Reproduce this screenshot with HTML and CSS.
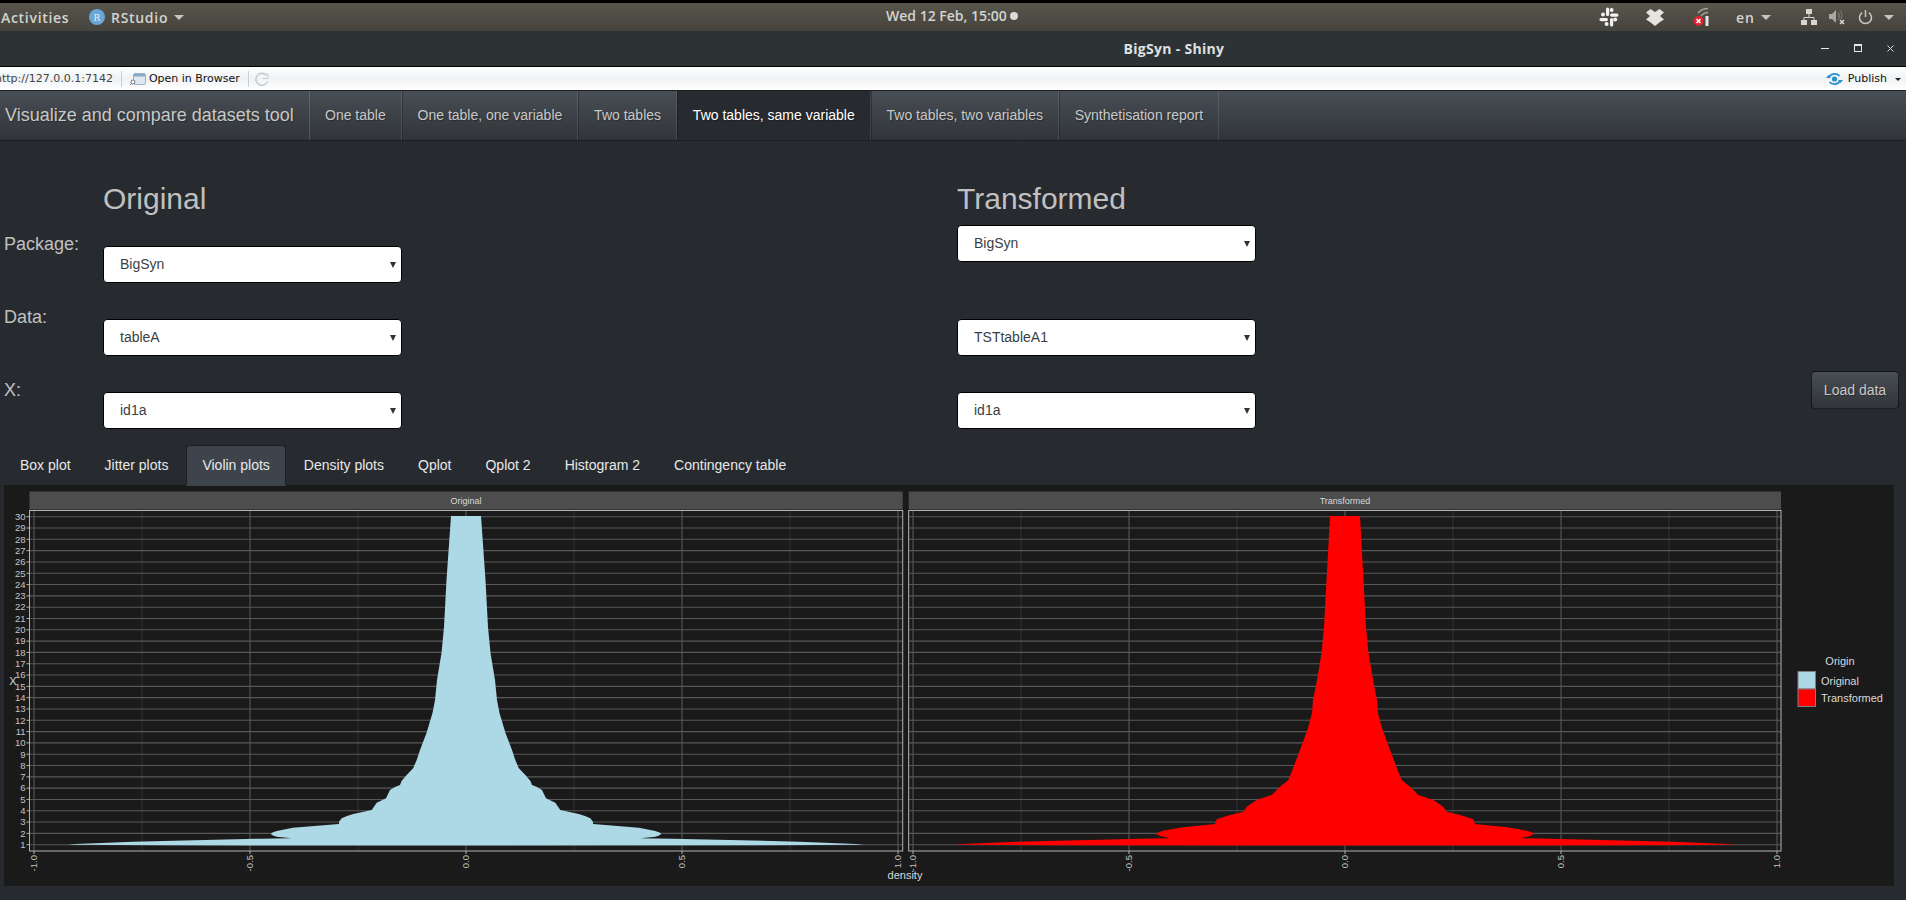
FILE: index.html
```html
<!DOCTYPE html>
<html lang="en">
<head>
    <meta charset="UTF-8">
    <meta name="viewport" content="width=device-width, initial-scale=1.0">
    <title>BigSyn - Shiny</title>
    <link rel="stylesheet" href="styles.css">
</head>
<body>
    <div class="desktop-bar">
        <div class="desktop-left">
            <span class="activities">Activities</span>
            <span class="app-menu">
                <svg class="rstudio-logo" width="16" height="16" viewBox="0 0 16 16"><circle cx="8" cy="8" r="8" fill="#6aa5d8"/><text x="8" y="11.5" class="rstudio-r">R</text></svg>
                <span class="app-name">RStudio</span>
                <span class="caret"></span>
            </span>
        </div>
        <div class="clock">Wed 12 Feb, 15:00<span class="clock-dot"></span></div>
        <div class="tray">
            <svg class="tray-icon slack" width="20" height="20" viewBox="0 0 20 20"><g fill="#f2f2f2"><rect x="7" y="0.5" width="3.2" height="8.5" rx="1.6"/><rect x="11" y="11" width="3.2" height="8.5" rx="1.6"/><rect x="0.5" y="11" width="8.5" height="3.2" rx="1.6"/><rect x="11" y="6.5" width="8.5" height="3.2" rx="1.6"/><circle cx="4" cy="7.6" r="2"/><circle cx="12.6" cy="3" r="2"/><circle cx="16.2" cy="12.6" r="2"/><circle cx="7.6" cy="17" r="2"/></g></svg>
            <svg class="tray-icon dropbox" width="18" height="17" viewBox="0 0 18 17"><path d="M0 3.5 4.5 0 9 3 13.5 0 18 3.5 14 7 18 10.5 14 13 9 17 4 13 0 10.5 4 7Z" fill="#e6e4de"/></svg>
            <svg class="tray-icon wifi" width="18" height="20" viewBox="0 0 18 20"><g fill="none" stroke="#a5a39c" stroke-width="1.6"><path d="M5 6C8 2.500 12 1.500 15 1.500"/><path d="M8 9C10 6.500 12 5.500 15 5.500"/></g><rect x="12.500" y="9" width="3" height="10" fill="#e8e6e0"/><circle cx="5.500" cy="14" r="5" fill="#e0242f"/><path d="M3.500 12 7.500 16M7.500 12 3.500 16" stroke="#fff" stroke-width="1.500"/></svg>
            <span class="lang">en<span class="caret"></span></span>
            <svg class="tray-icon network" width="16" height="16" viewBox="0 0 16 16"><g fill="#d8d6d0"><rect x="5" y="0" width="6" height="5"/><rect x="0" y="11" width="6" height="5"/><rect x="10" y="11" width="6" height="5"/></g><path d="M8 5V8.500M3 11V8.500H13V11" fill="none" stroke="#d8d6d0" stroke-width="1"/></svg>
            <svg class="tray-icon volume" width="16" height="16" viewBox="0 0 16 16"><path d="M0 5H3L7 1V14L3 10H0Z" fill="#a9a79f"/><path d="M9 3.500C10.500 5.500 10.500 8.500 9 11M11.500 1.500C13 4 13 8 12 10" fill="none" stroke="#77756e" stroke-width="1.400"/><path d="M11 11 15 15M15 11 11 15" stroke="#d8d6d0" stroke-width="1.500"/></svg>
            <svg class="tray-icon power" width="15" height="15" viewBox="0 0 15 15"><path d="M4.200 2.600A6 6 0 1 0 10.800 2.600" fill="none" stroke="#c8c6c0" stroke-width="1.500"/><path d="M7.500 0V7" stroke="#c8c6c0" stroke-width="1.500"/></svg>
            <span class="caret"></span>
        </div>
    </div>

    <div class="title-bar">
        <span class="window-title">BigSyn - Shiny</span>
        <div class="window-buttons">
            <span class="win-min"></span>
            <span class="win-max"></span>
            <svg width="7" height="7" viewBox="0 0 7 7"><path d="M.5 .5 6.500 6.500M6.500 .5 .5 6.500" stroke="#d8d8d8"/></svg>
        </div>
    </div>

    <div class="toolbar">
        <span class="toolbar-url">http://127.0.0.1:7142</span>
        <span class="toolbar-sep"></span>
        <svg class="browser-icon" width="16" height="14" viewBox="0 0 16 14"><rect x="3.500" y="1.500" width="12" height="11" rx="1.500" fill="#dfe8f0" stroke="#9db2c4"/><rect x="4" y="2" width="11" height="2.500" fill="#88a9c6"/><circle cx="3" cy="10" r="2" fill="#fff" stroke="#777"/><path d="M1.500 11.500 0 13" stroke="#777"/></svg>
        <span class="toolbar-link">Open in Browser</span>
        <span class="toolbar-sep"></span>
        <svg class="refresh-icon" width="14" height="14" viewBox="0 0 14 14"><path d="M11.500 3.500A6 6 0 1 0 12.500 9.500" fill="none" stroke="#c2ccd6" stroke-width="1.500"/><path d="M8 2H13V6.500H8" fill="none" stroke="#c2ccd6"/></svg>
        <span class="toolbar-spacer"></span>
        <svg class="publish-icon" width="17" height="14" viewBox="0 0 17 14"><g fill="none" stroke="#2a90d0" stroke-width="1.800"><path d="M2.500 5.500C5 1 11 1 13.500 4"/><path d="M14.500 8.500C12 13 6 13 3.500 10"/></g><path d="M0 6H5L2.500 3ZM17 8H12L14.500 11Z" fill="#2a90d0"/><circle cx="8.500" cy="7" r="2.600" fill="#2a90d0"/></svg>
        <span class="toolbar-publish">Publish</span>
        <span class="publish-caret"></span>
    </div>

    <nav class="navbar">
        <span class="brand">Visualize and compare datasets tool</span>
        <ul class="nav-items">
            <li>One table</li>
            <li>One table, one variable</li>
            <li>Two tables</li>
            <li class="active">Two tables, same variable</li>
            <li>Two tables, two variables</li>
            <li>Synthetisation report</li>
        </ul>
    </nav>

    <section class="selectors">
        <div class="label-col">
            <label>Package:</label>
            <label>Data:</label>
            <label>X:</label>
        </div>
        <div class="table-col original">
            <h2>Original</h2>
            <div class="select-box">BigSyn</div>
            <div class="select-box">tableA</div>
            <div class="select-box">id1a</div>
        </div>
        <div class="table-col transformed">
            <h2>Transformed</h2>
            <div class="select-box">BigSyn</div>
            <div class="select-box">TSTtableA1</div>
            <div class="select-box">id1a</div>
        </div>
        <button class="load-button">Load data</button>
    </section>

    <ul class="tabs">
        <li>Box plot</li>
        <li>Jitter plots</li>
        <li class="active">Violin plots</li>
        <li>Density plots</li>
        <li>Qplot</li>
        <li>Qplot 2</li>
        <li>Histogram 2</li>
        <li>Contingency table</li>
    </ul>

    <svg id="plot" class="plot" width="1890" height="401" viewBox="4 485 1890 401"></svg>

    <script>
        const plot = document.getElementById('plot');
        const yTop = 516.7;
        const yStep = 11.31;
        const panelTop = 510.5;
        const panelBottom = 851;

        // half width of the violin, px from its centre, top to bottom
        const blueShape = [[516, 15], [580, 19.5], [627, 22], [653, 24.5], [680, 29], [700, 31], [713, 33.5], [733, 39.5], [750, 46], [760, 49.3], [768, 52.7], [775, 59.3], [780.7, 64.3], [785, 66], [787, 71], [790, 76], [798.3, 80], [802.7, 89.3], [810, 94.3], [814, 112.7], [816, 119], [818.3, 124.3], [821.7, 127], [824, 127], [827.7, 173], [831, 189.3], [832.5, 193.5], [834, 195.3], [835.5, 193], [836.7, 189.3], [838.3, 174.3], [838.7, 206], [841.7, 333], [844, 390], [844.7, 398], [845.3, 300], [845.6, 43]];
        const redShape = [[516, 15], [580, 18.5], [627, 21], [653, 23.5], [680, 28], [700, 32], [713, 33], [728, 37], [750, 45], [763, 50], [771.7, 53.3], [780, 56.7], [786.7, 65], [795, 73.3], [800, 88.3], [806.7, 98.3], [811.7, 101.7], [815, 115], [819.3, 128.3], [824, 130], [827.3, 162], [830.7, 182], [832.5, 187], [834, 189], [836, 185], [838.3, 175], [838.5, 195], [841.7, 328], [844, 383], [844.7, 390], [845.3, 300], [845.6, 43]];

        function add(name, attrs, text) {
            const el = document.createElementNS('http://www.w3.org/2000/svg', name);
            for (const key in attrs) el.setAttribute(key, attrs[key]);
            if (text) el.textContent = text;
            plot.appendChild(el);
            return el;
        }

        function line(x1, y1, x2, y2, cls) {
            add('line', { x1, y1, x2, y2, class: cls });
        }

        function drawPanel(left, right, centre, title, shape, cls) {
            add('rect', { x: left, y: 491.5, width: right - left, height: 18, class: 'strip' });
            add('text', { x: centre, y: 504, class: 'strip-text' }, title);

            // vertical grid, minor lines first
            for (let i = -3; i <= 3; i += 2) {
                line(centre + i * 108, panelTop, centre + i * 108, panelBottom, 'grid-minor');
            }
            for (let i = -2; i <= 2; i++) {
                const x = centre + i * 216;
                line(x, panelTop, x, panelBottom, 'grid-major');
                line(x, panelBottom, x, panelBottom + 3, 'tick');
                const label = (i * 0.5).toFixed(1);
                add('text', { x: 0, y: 0, class: 'x-label', transform: `translate(${x + 3.2} 855) rotate(-90)` }, label);
            }
            for (let n = 0; n < 30; n++) {
                const y = yTop + n * yStep;
                line(left, y, right, y, 'grid-major');
            }

            const leftSide = shape.map(p => `${centre - p[1]},${p[0]}`);
            const rightSide = shape.slice().reverse().map(p => `${centre + p[1]},${p[0]}`);
            add('polygon', { points: leftSide.concat(rightSide).join(' '), class: cls });

            add('rect', { x: left, y: panelTop, width: right - left, height: panelBottom - panelTop, class: 'panel-border' });
        }

        drawPanel(29.5, 902.7, 466, 'Original', blueShape, 'violin-blue');
        drawPanel(908.7, 1781, 1345, 'Transformed', redShape, 'violin-red');

        for (let n = 0; n < 30; n++) {
            const y = yTop + n * yStep;
            line(26.5, y, 29.5, y, 'tick');
            add('text', { x: 25.5, y: y + 3.3, class: 'y-label' }, String(30 - n));
        }

        add('text', { x: 905, y: 879, class: 'axis-title' }, 'density');
        add('text', { x: 13, y: 685, class: 'axis-title' }, 'X');

        // legend
        add('text', { x: 1840, y: 665, class: 'axis-title' }, 'Origin');
        add('rect', { x: 1798, y: 671.5, width: 17.5, height: 17.5, class: 'key-blue' });
        add('rect', { x: 1798, y: 689, width: 17.5, height: 17.5, class: 'key-red' });
        add('text', { x: 1821, y: 685, class: 'legend-text' }, 'Original');
        add('text', { x: 1821, y: 702, class: 'legend-text' }, 'Transformed');
    </script>
</body>
</html>
```

FILE: styles.css
```css
html, body {
    margin: 0;
    padding: 0;
    height: 900px;
    overflow: hidden;
}
body {
    font-family: "Liberation Sans", Arial, sans-serif;
    font-size: 14px;
    background-color: #272b30;
    color: #c8c8c8;
}

/* desktop top bar */
.desktop-bar {
    display: flex;
    align-items: center;
    height: 28px;
    border-top: 3px solid #000;
    background: linear-gradient(#58554c, #45433d);
    font-family: "Open Sans", "Noto Sans", sans-serif;
    font-weight: 600;
    font-size: 14px;
    color: #d4d4d0;
    position: relative;
}
.desktop-left {
    display: flex;
    align-items: center;
    padding-left: 1px;
}
.activities {
    width: 88px;
    letter-spacing: 0.7px;
}
.app-menu {
    display: flex;
    align-items: center;
}
.app-name {
    letter-spacing: 0.7px;
}
.rstudio-logo {
    margin-right: 6px;
}
.rstudio-r {
    font-family: "DejaVu Serif", serif;
    font-size: 9px;
    font-weight: 400;
    fill: #e8f1fa;
    text-anchor: middle;
}
.caret {
    display: inline-block;
    width: 0;
    height: 0;
    margin-left: 6px;
    border-left: 5px solid transparent;
    border-right: 5px solid transparent;
    border-top: 5px solid #c8c6c0;
}
.clock {
    position: absolute;
    left: 886px;
    top: 0;
    line-height: 26px;
    display: flex;
    align-items: center;
}
.clock-dot {
    width: 8px;
    height: 8px;
    margin-left: 3px;
    border-radius: 50%;
    background-color: #d8d8d8;
}
.tray {
    margin-left: auto;
    display: flex;
    align-items: center;
    padding-right: 12px;
}
.tray-icon {
    flex: none;
}
.slack {
    margin-right: 27px;
}
.dropbox {
    margin-right: 29px;
}
.wifi {
    margin-right: 25px;
}
.lang {
    display: flex;
    align-items: center;
    margin-right: 30px;
    letter-spacing: 1px;
}
.network {
    margin-right: 12px;
}
.volume {
    margin-right: 13px;
}
.power {
    margin-right: 5px;
}

/* window title */
.title-bar {
    display: flex;
    align-items: center;
    justify-content: center;
    position: relative;
    height: 35px;
    background-color: #2d3235;
    border-bottom: 1px solid #000;
}
.window-title {
    font-family: "Open Sans", "Noto Sans", sans-serif;
    font-weight: 700;
    font-size: 14px;
    letter-spacing: 0.3px;
    color: #dfe0e0;
    margin-left: 442px;
}
.window-buttons {
    position: absolute;
    right: 12px;
    top: 13px;
    display: flex;
    align-items: center;
    gap: 25px;
}
.win-min {
    width: 8px;
    height: 1px;
    background-color: #e8e8e8;
}
.win-max {
    width: 6px;
    height: 5px;
    border: 1px solid #e8e8e8;
    border-top-width: 2px;
}

/* rstudio viewer toolbar */
.toolbar {
    display: flex;
    align-items: center;
    height: 23px;
    background: linear-gradient(#ffffff, #eff1f3 50%, #ffffff);
    font-family: "DejaVu Sans", sans-serif;
    font-size: 11px;
    color: #111;
}
.toolbar-url {
    margin-left: -5px;
    color: #444;
}
.toolbar-sep {
    width: 1px;
    height: 16px;
    margin: 0 8px;
    background-color: #ccd0d5;
}
.browser-icon {
    margin-right: 3px;
}
.refresh-icon {
    margin-left: -2px;
}
.toolbar-spacer {
    flex: 1;
}
.publish-icon {
    margin-right: 5px;
}
.publish-caret {
    width: 0;
    height: 0;
    margin: 1px 5px 0 8px;
    border-left: 3px solid transparent;
    border-right: 3px solid transparent;
    border-top: 3px solid #222;
}

/* shiny navbar */
.navbar {
    display: flex;
    height: 49px;
    border-top: 1px solid #1c1e22;
    border-bottom: 1px solid #1c1e22;
    background: linear-gradient(#484e55, #3a3f44 60%, #313539);
    text-shadow: 1px 1px 1px rgba(0,0,0,0.3);
}
.brand {
    width: 304px;
    padding-left: 5px;
    font-size: 18px;
    line-height: 49px;
    color: #c8c8c8;
}
.nav-items {
    display: flex;
    list-style: none;
    margin: 0;
    padding: 0;
}
.nav-items li {
    padding: 0 15px;
    line-height: 49px;
    border-left: 1px solid rgba(0,0,0,0.25);
    border-right: 1px solid rgba(255,255,255,0.1);
    margin-right: -0.2px;
    color: #c8c8c8;
}
.nav-items li:first-child {
    border-left-color: rgba(255,255,255,0.15);
}
.nav-items li.active {
    background: #272b30;
    color: #fff;
}

/* dataset selectors */
.selectors {
    display: flex;
    height: 304px;
}
.label-col {
    width: 103px;
    padding: 93px 0 0 4px;
    box-sizing: border-box;
    flex: none;
    color: #c0c0c0;
}
.label-col label {
    display: block;
    height: 73px;
    font-size: 18px;
    line-height: 20px;
}
.table-col {
    width: 854px;
    flex: none;
}
.table-col h2 {
    margin: 0;
    padding-top: 41px;
    font-size: 30px;
    font-weight: 400;
    line-height: 33px;
    color: #c0c0c0;
}
.select-box {
    position: relative;
    box-sizing: border-box;
    width: 299px;
    height: 37px;
    margin-top: 36px;
    padding-left: 16px;
    border: 1px solid #000;
    border-radius: 4px;
    background-color: #fff;
    color: #3a3f44;
    line-height: 35px;
}
.select-box::after {
    content: "";
    position: absolute;
    right: 5px;
    top: 15px;
    border-left: 3px solid transparent;
    border-right: 3px solid transparent;
    border-top: 6px solid #333;
}
.original h2 + .select-box {
    margin-top: 31px;
}
.transformed h2 + .select-box {
    margin-top: 10px;
}
.transformed .select-box + .select-box {
    margin-top: 57px;
}
.transformed .select-box + .select-box + .select-box {
    margin-top: 36px;
}
.load-button {
    align-self: flex-start;
    flex: none;
    width: 88px;
    height: 38px;
    margin-top: 230px;
    padding: 0;
    border: 1px solid rgba(0,0,0,0.6);
    border-radius: 4px;
    background: linear-gradient(#484e55, #3a3f44 60%, #313539);
    color: #c8c8c8;
    font-family: inherit;
    font-size: 14px;
    text-shadow: 1px 1px 1px rgba(0,0,0,0.3);
}

/* plot tabs */
.tabs {
    display: flex;
    list-style: none;
    height: 41px;
    margin: 0 0 -1px 4px;
    padding: 0;
    position: relative;
}
.tabs li {
    margin-right: 2px;
    padding: 0 15px;
    border: 1px solid transparent;
    border-radius: 4px 4px 0 0;
    line-height: 39px;
    color: #e8e8e8;
}
.tabs li.active {
    background-color: #3e444c;
    border-color: #1c1e22;
    border-bottom-color: transparent;
}

/* ggplot output */
.plot {
    display: block;
    margin-left: 4px;
    background-color: #1a1a1a;
    font-family: "Liberation Sans", Arial, sans-serif;
}
.strip {
    fill: #4d4d4d;
}
.strip-text {
    font-size: 9px;
    fill: #d9d9d9;
    text-anchor: middle;
}
.grid-major {
    stroke: #585858;
    stroke-width: 1.1;
}
.grid-minor {
    stroke: #333;
    stroke-width: 1;
}
.tick {
    stroke: #b3b3b3;
    stroke-width: 1;
}
.panel-border {
    fill: none;
    stroke: #b3b3b3;
    stroke-width: 1;
}
.violin-blue {
    fill: #add8e6;
}
.violin-red {
    fill: #ff0000;
}
.x-label {
    font-size: 9.5px;
    fill: #c4c4c4;
    text-anchor: end;
}
.y-label {
    font-size: 9.5px;
    fill: #c4c4c4;
    text-anchor: end;
}
.axis-title {
    font-size: 11px;
    fill: #d9d9d9;
    text-anchor: middle;
}
.legend-text {
    font-size: 11px;
    fill: #d9d9d9;
}
.key-blue {
    fill: #add8e6;
    stroke: #7f7f7f;
}
.key-red {
    fill: #ff0000;
    stroke: #7f7f7f;
}
```
